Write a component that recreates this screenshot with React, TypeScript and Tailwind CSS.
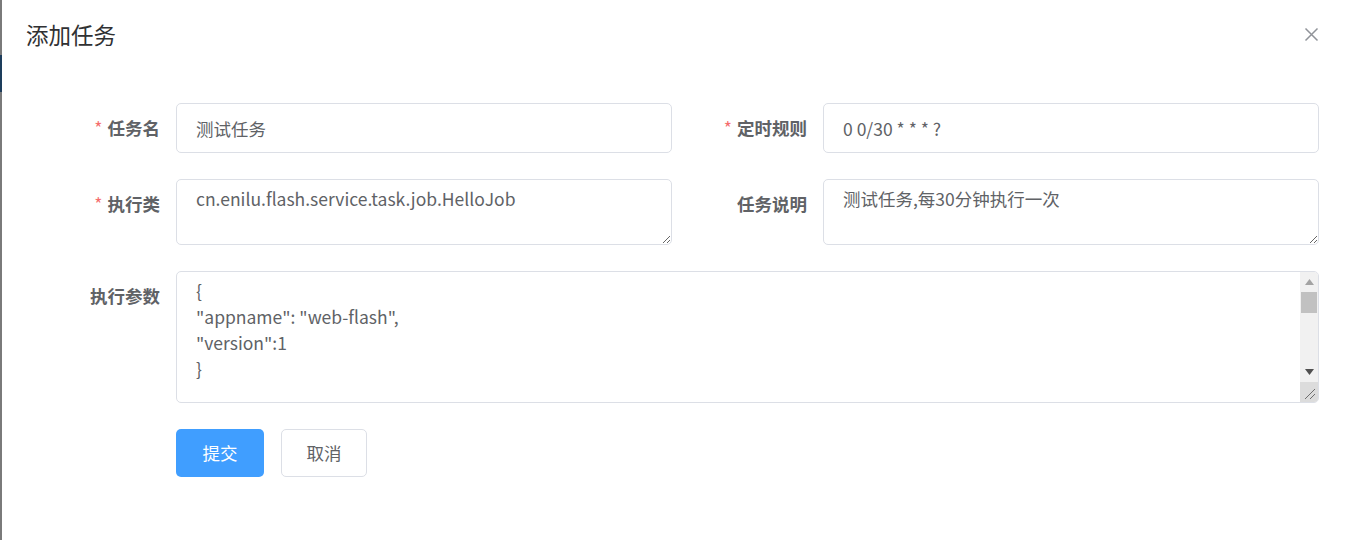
import React from 'react';

const labelCls = 'shrink-0 pr-[16px] text-right text-[17.5px] font-bold leading-[50px] text-[#606266]';
const boxCls = 'rounded-[5px] border border-[#dcdfe6] bg-white text-[17.5px] text-[#606266] outline-none';

function Label({ text, required, wide }: { text: string; required?: boolean; wide?: boolean }) {
  return (
    <label className={`${labelCls} ${wide ? 'w-[151px]' : 'w-[150px]'}`}>
      {required && <span className="mr-[5px] font-normal text-[#f56c6c]">*</span>}
      {text}
    </label>
  );
}

function Scrollbar() {
  return (
    <div className="flex w-[18px] shrink-0 flex-col bg-[#f1f1f1]">
      <div className="flex h-[20px] items-center justify-center">
        <svg width="9" height="6" viewBox="0 0 9 6">
          <path d="M0 6 L4.5 0 L9 6 Z" fill="#a3a3a3" />
        </svg>
      </div>
      <div className="mx-[1px] h-[21px] bg-[#c1c1c1]" />
      <div className="flex-1" />
      <div className="flex h-[20px] items-center justify-center">
        <svg width="9" height="6" viewBox="0 0 9 6">
          <path d="M0 0 L9 0 L4.5 6 Z" fill="#505050" />
        </svg>
      </div>
      <div className="flex h-[20px] items-end justify-end bg-[#dcdcdc] pb-[2px] pr-[2px]">
        <svg width="12" height="12" viewBox="0 0 12 12">
          <path d="M1 11 L11 1 M6 11 L11 6" stroke="#6e6e6e" strokeWidth="1" />
        </svg>
      </div>
    </div>
  );
}

export default function App() {
  return (
    <div className="flex h-[540px] w-[1345px] bg-white font-['Noto_Sans_CJK_SC',sans-serif]">
      <div className="flex w-[2px] shrink-0 flex-col bg-[#7a7a7a]">
        <div className="mt-[55px] h-[37px] bg-[#1d3d5c]" />
      </div>
      <div className="relative flex-1 pl-[24px] pr-[24px]">
        <div className="pt-[19px]">
          <h2 className="text-[22.5px] leading-[30px] text-[#303133]">添加任务</h2>
          <button className="absolute right-[26px] top-[27px] text-[#909399]">
            <svg width="15" height="15" viewBox="0 0 15 15">
              <path d="M1.5 1.5 L13.5 13.5 M13.5 1.5 L1.5 13.5" stroke="#909399" strokeWidth="1.5" />
            </svg>
          </button>
        </div>

        <div className="mt-[54px] flex flex-col">
          <div className="flex">
            <div className="flex w-[646px]">
              <Label text="任务名" required />
              <input
                readOnly
                defaultValue="测试任务"
                className={`${boxCls} h-[50px] w-[496px] px-[19px]`}
              />
            </div>
            <div className="flex w-[647px]">
              <Label text="定时规则" required wide />
              <input
                readOnly
                defaultValue="0 0/30 * * * ?"
                className={`${boxCls} h-[50px] w-[496px] px-[19px]`}
              />
            </div>
          </div>

          <div className="mt-[26px] flex">
            <div className="flex w-[646px]">
              <Label text="执行类" required />
              <textarea
                readOnly
                defaultValue="cn.enilu.flash.service.task.job.HelloJob"
                className={`${boxCls} h-[66px] w-[496px] resize-y px-[19px] py-[6px] leading-[26px]`}
              />
            </div>
            <div className="flex w-[647px]">
              <Label text="任务说明" wide />
              <textarea
                readOnly
                defaultValue="测试任务,每30分钟执行一次"
                className={`${boxCls} h-[66px] w-[496px] resize-y px-[19px] py-[6px] leading-[26px]`}
              />
            </div>
          </div>

          <div className="mt-[26px] flex">
            <Label text="执行参数" />
            <div className={`${boxCls} flex h-[132px] w-[1143px] overflow-hidden`}>
              <div className="flex-1 whitespace-pre px-[19px] py-[6px] leading-[26px]">
                {'{\n"appname": "web-flash",\n"version":1\n}'}
              </div>
              <Scrollbar />
            </div>
          </div>

          <div className="mt-[26px] flex gap-[17px] pl-[150px]">
            <button className="h-[48px] w-[88px] rounded-[5px] bg-[#409eff] text-[17.5px] text-white">
              提交
            </button>
            <button className="h-[48px] w-[86px] rounded-[5px] border border-[#dcdfe6] bg-white text-[17.5px] text-[#606266]">
              取消
            </button>
          </div>
        </div>
      </div>
    </div>
  );
}
